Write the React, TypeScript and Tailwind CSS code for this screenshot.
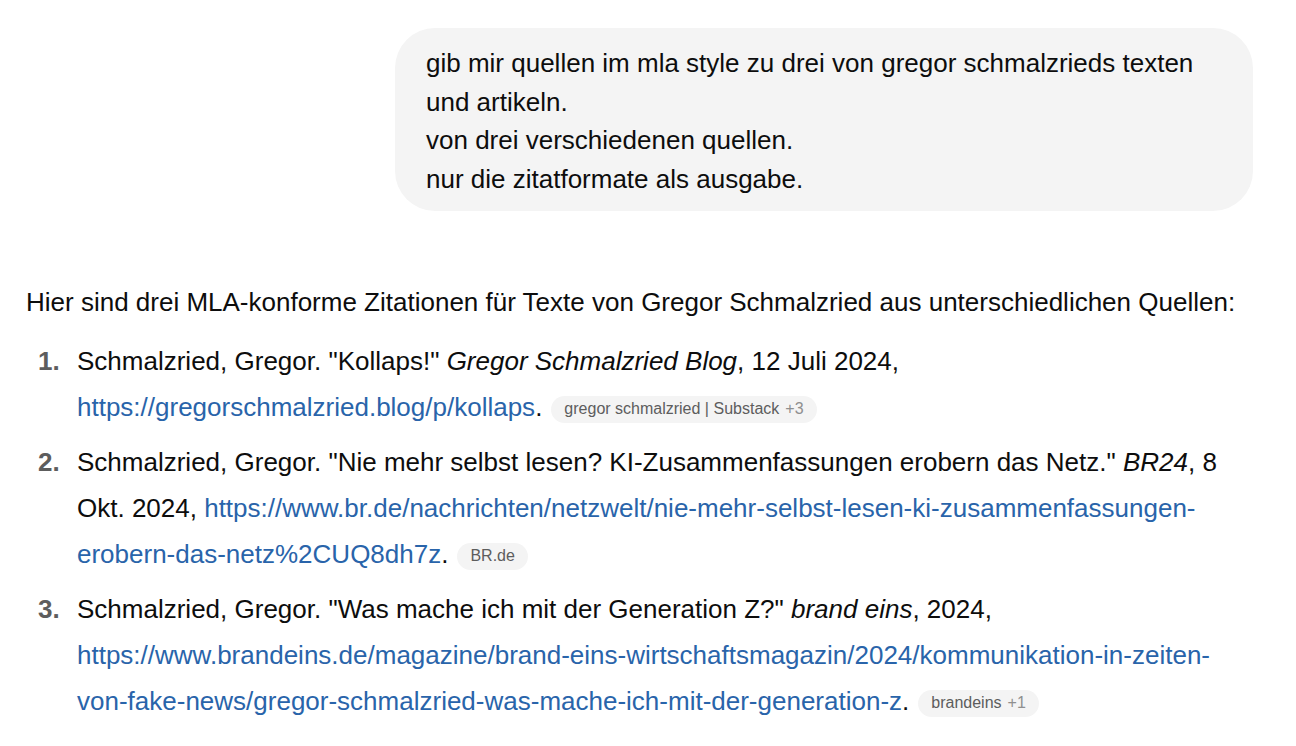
import React from 'react'

const Badge = ({ label, extra }: { label: string; extra?: string }) => (
  <span className="ml-[9px] inline-flex h-[27px] items-center gap-[6px] rounded-full bg-[#f4f4f4] px-[13px] align-[2px] text-[16px] leading-none text-[#5d5d5d]">
    <span>{label}</span>
    {extra && <span className="text-[#8f8f8f]">{extra}</span>}
  </span>
)

const Link = ({ children }: { children: React.ReactNode }) => (
  <span className="text-[#2964aa]">{children}</span>
)

export default function App() {
  return (
    <div
      className="min-h-screen bg-white text-[#0d0d0d]"
      style={{ fontFamily: '"Liberation Sans", Arial, sans-serif' }}
    >
      {/* user bubble */}
      <div className="flex justify-end pt-[28px] pr-[43px]">
        <div className="w-[858px] rounded-[40px] bg-[#f4f4f4] pl-[31px] pr-[20px] pt-[16px] pb-[13px] text-[26px] leading-[38.5px]">
          gib mir quellen im mla style zu drei von gregor schmalzrieds texten
          <br />
          und artikeln.
          <br />
          von drei verschiedenen quellen.
          <br />
          nur die zitatformate als ausgabe.
        </div>
      </div>

      {/* assistant answer */}
      <div className="pl-[26px] pr-[43px] pt-[68px] text-[26px] leading-[46px]">
        <p>Hier sind drei MLA-konforme Zitationen für Texte von Gregor Schmalzried aus unterschiedlichen Quellen:</p>

        <ol className="mt-[13px] flex flex-col gap-[9px]">
          <li className="flex">
            <span className="w-[51px] shrink-0 pl-[12px] font-bold text-[#5d5d5d]">1.</span>
            <div className="whitespace-nowrap">
              Schmalzried, Gregor. "Kollaps!" <i>Gregor Schmalzried Blog</i>, 12 Juli 2024,
              <br />
              <Link>https://gregorschmalzried.blog/p/kollaps</Link>.
              <Badge label="gregor schmalzried | Substack" extra="+3" />
            </div>
          </li>
          <li className="flex">
            <span className="w-[51px] shrink-0 pl-[12px] font-bold text-[#5d5d5d]">2.</span>
            <div className="whitespace-nowrap">
              Schmalzried, Gregor. "Nie mehr selbst lesen? KI-Zusammenfassungen erobern das Netz." <i>BR24</i>, 8
              <br />
              Okt. 2024, <Link>https://www.br.de/nachrichten/netzwelt/nie-mehr-selbst-lesen-ki-zusammenfassungen-</Link>
              <br />
              <Link>erobern-das-netz%2CUQ8dh7z</Link>.
              <Badge label="BR.de" />
            </div>
          </li>
          <li className="flex">
            <span className="w-[51px] shrink-0 pl-[12px] font-bold text-[#5d5d5d]">3.</span>
            <div className="whitespace-nowrap">
              Schmalzried, Gregor. "Was mache ich mit der Generation Z?" <i>brand eins</i>, 2024,
              <br />
              <Link>https://www.brandeins.de/magazine/brand-eins-wirtschaftsmagazin/2024/kommunikation-in-zeiten-</Link>
              <br />
              <Link>von-fake-news/gregor-schmalzried-was-mache-ich-mit-der-generation-z</Link>.
              <Badge label="brandeins" extra="+1" />
            </div>
          </li>
        </ol>
      </div>
    </div>
  )
}
